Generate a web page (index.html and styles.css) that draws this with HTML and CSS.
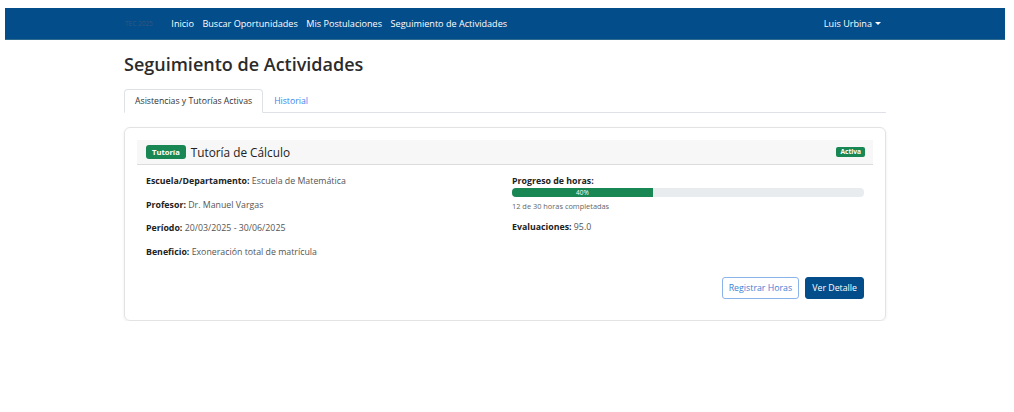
FILE: index.html
```html
<!DOCTYPE html>
<html lang="es">
<head>
<meta charset="utf-8">
<title>Seguimiento de Actividades</title>
<link rel="stylesheet" href="styles.css">
</head>
<body>
<nav class="navbar">
  <div class="nav-inner">
    <div class="nav-left">
      <span class="brand">TEC 2025</span>
      <a class="nav-link" href="#">Inicio</a>
      <a class="nav-link" href="#">Buscar Oportunidades</a>
      <a class="nav-link" href="#">Mis Postulaciones</a>
      <a class="nav-link" href="#">Seguimiento de Actividades</a>
    </div>
    <a class="nav-link user" href="#">Luis Urbina <span class="caret"></span></a>
  </div>
</nav>
<main class="container">
  <h1 class="page-title">Seguimiento de Actividades</h1>
  <ul class="tabs">
    <li class="tab active">Asistencias y Tutorías Activas</li>
    <li class="tab">Historial</li>
  </ul>
  <section class="card">
    <header class="card-header">
      <div class="head-left">
        <span class="badge">Tutoría</span>
        <span class="card-title">Tutoría de Cálculo</span>
      </div>
      <span class="badge small">Activa</span>
    </header>
    <div class="card-body">
      <div class="grid">
        <div class="col">
          <p class="row"><b>Escuela/Departamento:</b> Escuela de Matemática</p>
          <p class="row"><b>Profesor:</b> Dr. Manuel Vargas</p>
          <p class="row"><b>Período:</b> 20/03/2025 - 30/06/2025</p>
          <p class="row"><b>Beneficio:</b> Exoneración total de matrícula</p>
        </div>
        <div class="col">
          <p class="prog-label"><b>Progreso de horas:</b></p>
          <div class="progress"><div class="progress-bar" style="width:40%">40%</div></div>
          <p class="muted">12 de 30 horas completadas</p>
          <p class="row"><b>Evaluaciones:</b> 95.0</p>
        </div>
      </div>
      <div class="actions">
        <button class="btn btn-outline">Registrar Horas</button>
        <button class="btn btn-primary">Ver Detalle</button>
      </div>
    </div>
  </section>
</main>
</body>
</html>
```

FILE: styles.css
```css
* { box-sizing: border-box; }
body {
  margin: 0;
  padding-right: 4px;
  font-family: "Open Sans", "Noto Sans", "Liberation Sans", sans-serif;
  color: #212529;
  background: #fff;
}
.navbar {
  margin: 8px 5px 0 5px;
  height: 32px;
  background: #034d8b;
  border-bottom: 1px solid #2e6b8c;
}
.nav-inner {
  width: 762px;
  margin: 0 auto;
  height: 100%;
  display: flex;
  align-items: center;
  justify-content: space-between;
}
.nav-left { display: flex; align-items: center; gap: 8.5px; }
.brand {
  font-size: 6.5px;
  color: #35577f;
  margin-right: 10px;
  margin-left: 1px;
}
.nav-link {
  color: #fff;
  text-decoration: none;
  font-size: 9.1px;
}
.user { margin-right: 5px; display: flex; align-items: center; gap: 3px; }
.caret {
  width: 0; height: 0;
  border-left: 3px solid transparent;
  border-right: 3px solid transparent;
  border-top: 3px solid #fff;
}
.container { width: 762px; margin: 0 auto; }
.page-title {
  margin: 12px 0 0;
  font-size: 18px;
  line-height: 24px;
  font-weight: 600;
  color: #2b2b2b;
}
.tabs {
  list-style: none;
  margin: 13px 0 0;
  padding: 0;
  display: flex;
  border-bottom: 1px solid #dee2e6;
}
.tab {
  font-size: 8.7px;
  height: 24px;
  line-height: 22px;
  padding: 0 10px;
  color: #3b82f0;
  border: 1px solid transparent;
  margin-bottom: -1px;
}
.tab.active {
  color: #333;
  border-color: #dee2e6 #dee2e6 #fff;
  border-radius: 4px 4px 0 0;
  background: #fff;
}
.card {
  margin-top: 14px;
  border: 1px solid #e3e3e3;
  border-radius: 6px;
  padding: 12px;
  box-shadow: 0 1px 3px rgba(0,0,0,0.08);
}
.card-header {
  height: 25px;
  background: #f7f7f7;
  border-bottom: 1px solid #dcdcdc;
  display: flex;
  align-items: center;
  justify-content: space-between;
  padding: 0 8px 0 9px;
}
.head-left { display: flex; align-items: center; gap: 5px; }
.badge {
  background: #198754;
  color: #fff;
  font-size: 7.6px;
  font-weight: 700;
  line-height: 14px;
  height: 14px;
  padding: 0 6px;
  border-radius: 3px;
}
.badge.small {
  font-size: 6.6px;
  line-height: 10px;
  height: 10px;
  padding: 0 4px;
  border-radius: 2px;
}
.card-title { font-size: 11.8px; color: #222; }
.card-body { padding: 10px 9px 9px; }
.grid {
  display: grid;
  grid-template-columns: 1fr 1fr;
  column-gap: 14px;
}
.row, .prog-label, .muted {
  margin: 0;
  font-size: 8.8px;
  line-height: 13px;
  color: #555;
}
.row { margin-bottom: 10.7px; }
.row b, .prog-label b { color: #222; }
.progress {
  margin-top: 0;
  height: 9px;
  border-radius: 4px;
  background: #e9ecef;
  overflow: hidden;
}
.progress-bar {
  height: 100%;
  background: #198754;
  color: #fff;
  font-size: 6.4px;
  line-height: 9px;
  text-align: center;
}
.muted { font-size: 7.4px; color: #666; margin: 3px 0 8px; }
.actions {
  margin-top: 7px;
  display: flex;
  justify-content: flex-end;
  gap: 6px;
}
.btn {
  font-family: inherit;
  font-size: 8.8px;
  height: 22px;
  padding: 0 6px;
  border-radius: 3px;
  cursor: pointer;
}
.btn-outline {
  background: #fff;
  color: #3d7fd6;
  border: 1px solid #8ab4ea;
}
.btn-primary {
  background: #034d8b;
  color: #fff;
  border: 1px solid #034d8b;
}
```
